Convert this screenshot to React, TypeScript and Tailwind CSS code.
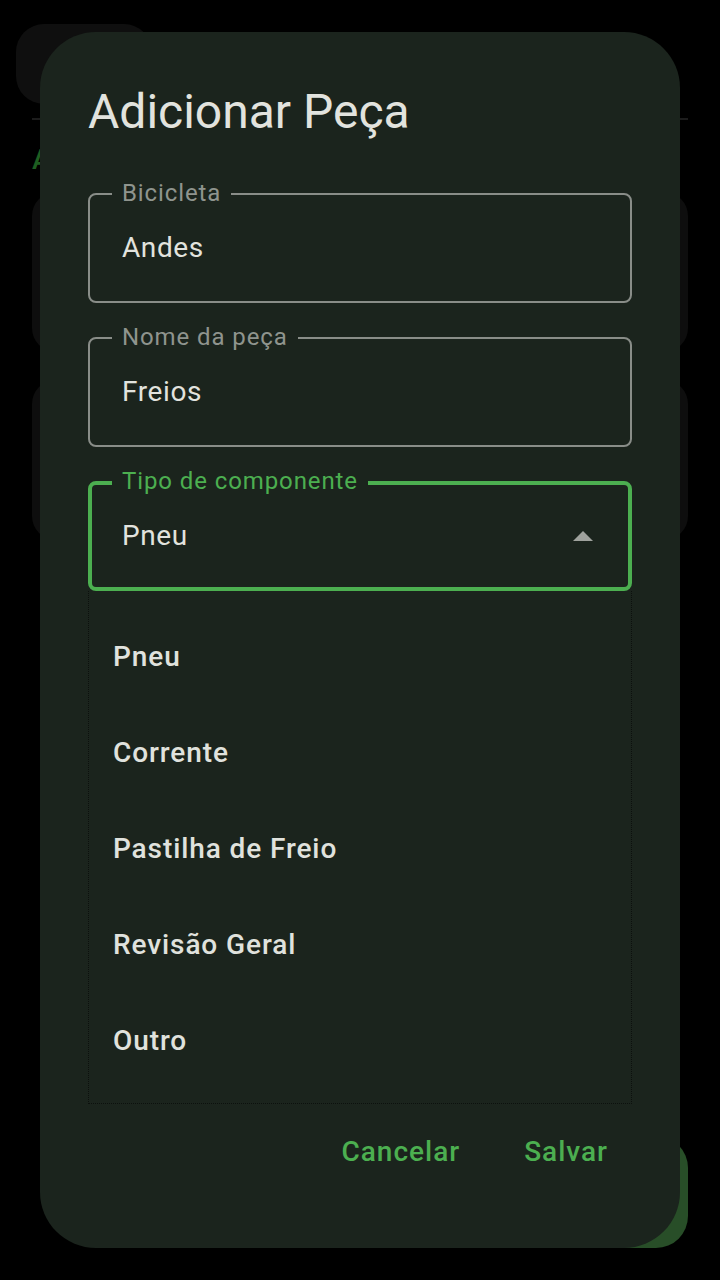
import React from "react";

const DIALOG_BG = "bg-[#1b241d]";

function Field({ label, value }: { label: string; value: string }) {
  return (
    <div className="relative h-[110px] rounded-[8px] border-2 border-[#898d88] flex items-center pl-8">
      <span className={`absolute left-[22px] -top-[14px] px-[10px] ${DIALOG_BG} text-[24px] leading-[24px] tracking-[0.9px] text-[#8f948e]`}>
        {label}
      </span>
      <span className="text-[28px] leading-none tracking-[0.6px] text-[#e2e3de]">{value}</span>
    </div>
  );
}

const options = ["Pneu", "Corrente", "Pastilha de Freio", "Revisão Geral", "Outro"];

export default function App() {
  return (
    <div className="relative w-[720px] h-[1280px] bg-black overflow-hidden font-['Roboto','Liberation_Sans',sans-serif]">
      {/* Background page (dimmed by scrim) */}
      <div className="flex flex-col">
        <div className="pt-6 px-4">
          <div className="w-[136px] h-[80px] rounded-[28px] bg-[#0f0f0f]" />
        </div>
        <div className="mx-8 mt-[14px] h-[2px] bg-[#1c1c1c]" />
        <div className="mx-8 mt-[26px] text-[28px] leading-[28px] font-medium text-[#1e5e21]">Andes</div>
        <div className="mx-8 mt-[18px] flex flex-col gap-[28px]">
          <div className="h-[160px] rounded-[24px] bg-[#0e0e0e]" />
          <div className="h-[160px] rounded-[24px] bg-[#0e0e0e]" />
        </div>
      </div>
      <div className="absolute right-8 bottom-8 w-[112px] h-[112px] rounded-[32px] bg-[#284e28]" />

      {/* Dialog */}
      <div className={`absolute left-[40px] top-[32px] w-[640px] h-[1216px] rounded-[56px] ${DIALOG_BG} flex flex-col px-12 pt-12 pb-[56px]`}>
        <h1 className="text-[48px] leading-[64px] font-normal text-[#e2e3de]">Adicionar Peça</h1>
        <div className="mt-[49px] flex flex-col gap-[34px]">
          <Field label="Bicicleta" value="Andes" />
          <Field label="Nome da peça" value="Freios" />
          <div className="relative">
            <div className="relative h-[110px] rounded-[8px] border-4 border-[#4caf50] flex items-center pl-[30px] pr-[35px]">
              <span className={`absolute left-[20px] -top-[16px] px-[10px] ${DIALOG_BG} text-[24px] leading-[24px] tracking-[0.9px] text-[#4caf50]`}>
                Tipo de componente
              </span>
              <span className="text-[28px] leading-none tracking-[0.6px] text-[#e2e3de]">Pneu</span>
              <svg className="ml-auto" width="20" height="10" viewBox="0 0 20 10">
                <polygon points="0,10 10,0 20,10" fill="#9fa29d" />
              </svg>
            </div>
            {/* Dropdown menu */}
            <div className={`absolute left-0 right-0 top-full z-10 ${DIALOG_BG} border-x border-b border-dotted border-[#0c100d] pt-[18px] pb-[14px] flex flex-col`}>
              {options.map((o) => (
                <div key={o} className="h-[96px] flex items-center px-6 text-[28px] font-medium tracking-[0.9px] text-[#e0e2dd]">
                  {o}
                </div>
              ))}
            </div>
          </div>
        </div>
        <div className="flex-1" />
        <div className="flex justify-end gap-4 h-[80px]">
          <button className="px-6 h-full text-[28px] font-medium tracking-[1px] text-[#4caf50]">Cancelar</button>
          <button className="px-6 h-full text-[28px] font-medium tracking-[1px] text-[#4caf50]">Salvar</button>
        </div>
      </div>
    </div>
  );
}
